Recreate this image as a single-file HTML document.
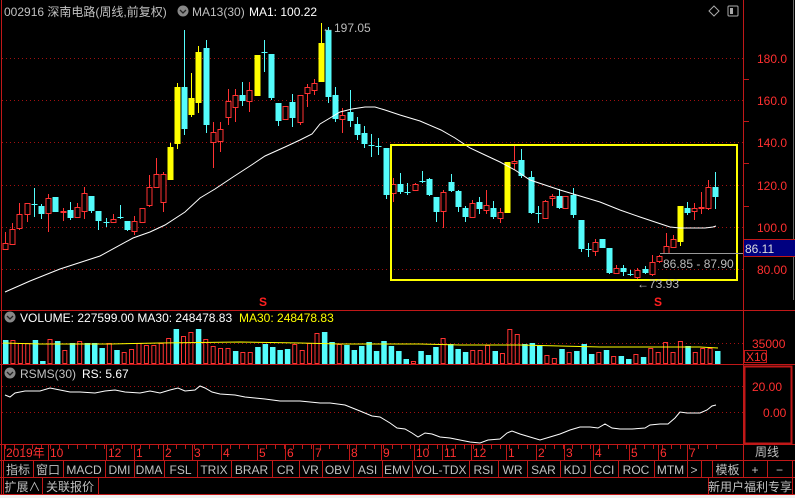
<!DOCTYPE html>
<html><head><meta charset="utf-8"><style>
html,body{margin:0;padding:0;background:#000;width:795px;height:498px;overflow:hidden;font-family:"Liberation Sans","Noto Sans CJK SC",sans-serif}
svg{position:absolute;left:0;top:0}
</style></head><body>
<svg id="s" width="795" height="498" viewBox="0 0 795 498" xmlns="http://www.w3.org/2000/svg" font-family="Liberation Sans, Noto Sans CJK SC, sans-serif">
<rect width="795" height="498" fill="#000"/>
<rect x="0" y="495" width="795" height="3" fill="#f0f0f0"/>
<g id="grid" stroke="#a01010" stroke-dasharray="1,3" stroke-width="1">
<line x1="2" y1="58.5" x2="743" y2="58.5"/><line x1="2" y1="100.5" x2="743" y2="100.5"/><line x1="2" y1="142.5" x2="743" y2="142.5"/><line x1="2" y1="185.5" x2="743" y2="185.5"/><line x1="2" y1="227.5" x2="743" y2="227.5"/><line x1="2" y1="269.5" x2="743" y2="269.5"/>
<line x1="2" y1="343.5" x2="743" y2="343.5"/><line x1="2" y1="386.5" x2="743" y2="386.5"/><line x1="2" y1="412.5" x2="743" y2="412.5"/>
</g>
<g stroke="#c01818" stroke-width="1" fill="none">
<line x1="1.5" y1="0" x2="1.5" y2="495"/>
<line x1="743.5" y1="0" x2="743.5" y2="460"/>
<line x1="0" y1="310.5" x2="795" y2="310.5"/>
<line x1="0" y1="364.5" x2="795" y2="364.5"/>
<line x1="0" y1="444.5" x2="795" y2="444.5"/>
<line x1="0" y1="460.5" x2="795" y2="460.5"/>
<line x1="0" y1="477.5" x2="795" y2="477.5"/>
<line x1="0" y1="494.5" x2="795" y2="494.5"/>
<rect x="744.5" y="366.5" width="47" height="77" stroke-width="2"/>
<rect x="744.5" y="350.5" width="22" height="12"/>
</g>
<line x1="793.5" y1="0" x2="793.5" y2="300" stroke="#666"/>
<g id="ticks" stroke="#c01818"></g>
<g id="vol"></g>
<polyline id="vma" fill="none" stroke="#ffff00" stroke-width="1"/>
<g id="cand"></g>
<polyline id="ma" fill="none" stroke="#fff" stroke-width="1"/>
<polyline id="rs" fill="none" stroke="#fff" stroke-width="1"/>
<rect x="391" y="145" width="346" height="135" fill="none" stroke="#ffff00" stroke-width="2"/>
<line x1="660" y1="253.5" x2="743" y2="253.5" stroke="#999"/>
<rect x="744" y="240" width="51" height="16" fill="#000080"/>
<line x1="744" y1="239.5" x2="795" y2="239.5" stroke="#c01818"/><line x1="744" y1="256.5" x2="795" y2="256.5" stroke="#c01818"/>
<g font-size="12" fill="#ff3030">
<text x="757" y="63">180.0</text><text x="757" y="105">160.0</text><text x="757" y="147">140.0</text><text x="757" y="190">120.0</text><text x="757" y="232">100.0</text><text x="757" y="274">80.00</text>
<text x="752" y="348">35000</text><text x="746" y="361">X10</text>
<text x="752" y="391">20.00</text><text x="763" y="417">0.00</text>
</g>
<text x="745" y="253" font-size="12" fill="#ddd">86.11</text>
<g font-size="12" fill="#bbb">
<text x="663" y="268">86.85 - 87.90</text>
<text x="637" y="288">&#8592;73.93</text>
<text x="322" y="32">&#8592;197.05</text>
</g>
<g font-size="12">
<text x="4" y="16" fill="#c0c0c0">002916 深南电路(周线,前复权)</text>
<circle cx="183" cy="11" r="5.5" fill="#888"/><path d="M180 10 l3 3 l3 -3" stroke="#222" stroke-width="1.3" fill="none"/>
<text x="192" y="16" fill="#c0c0c0">MA13(30)</text>
<text x="249" y="16" fill="#fff">MA1: 100.22</text>
<circle cx="10" cy="317" r="5.5" fill="#888"/><path d="M7 316 l3 3 l3 -3" stroke="#222" stroke-width="1.3" fill="none"/>
<text x="20" y="322" fill="#fff">VOLUME: 227599.00 MA30: 248478.83</text>
<text x="239" y="322" fill="#ffff00">MA30: 248478.83</text>
<circle cx="10" cy="373" r="5.5" fill="#888"/><path d="M7 372 l3 3 l3 -3" stroke="#222" stroke-width="1.3" fill="none"/>
<text x="20" y="378" fill="#c0c0c0">RSMS(30)</text><text x="82" y="378" fill="#fff">RS: 5.67</text>
</g>
<path d="M714 6 l5 5 l-5 5 l-5 -5 z" stroke="#aaa" fill="none"/>
<rect x="728" y="6" width="10" height="10" rx="1" stroke="#aaa" fill="none"/><rect x="730" y="8" width="3" height="6" fill="#aaa"/>
<g font-size="12" font-weight="bold" fill="#ff2020"><text x="259" y="306">S</text><text x="654" y="306">S</text></g>
<g id="dates" font-size="12" fill="#ff3030"></g>
<text x="755" y="456" font-size="12" fill="#c0c0c0">周线</text>
<g id="tb" font-size="12" fill="#c0c0c0"></g>
</svg>
<script>
var NS="http://www.w3.org/2000/svg";
function el(p,t,a,tx){var e=document.createElementNS(NS,t);for(var k in a)e.setAttribute(k,a[k]);if(tx)e.textContent=tx;document.getElementById(p).appendChild(e);return e;}
var C={r:"#ff3232",c:"#54fcfc",y:"#ffff00"};
var d=[[5,'r',243,249,232,249],[12,'r',229,244,223,244],[19,'r',214,228,203,230],[27,'r',203,214,203,222],[34,'c',204,205,188,217],[41,'c',206,214,204,219],[48,'r',198,213,194,232],[55,'c',197,212,197,212],[63,'r',211,212,208,221],[70,'c',210,218,202,220],[77,'r',207,217,203,218],[84,'r',193,211,187,219],[91,'c',196,211,196,213],[98,'c',211,221,211,230],[106,'c',222,223,218,227],[113,'r',219,222,214,223],[120,'c',217,218,205,219],[127,'c',221,230,221,231],[134,'r',221,231,216,235],[142,'r',208,222,208,223],[149,'r',187,205,175,207],[156,'r',174,187,158,187],[163,'r',174,202,172,212],[170,'y',147,180,143,180],[177,'y',87,144,83,149],[184,'c',87,129,30,135],[191,'y',98,115,73,117],[198,'y',52,103,46,113],[206,'c',48,125,40,133],[213,'r',132,142,122,168],[220,'r',129,141,122,152],[228,'r',101,117,89,125],[235,'r',95,107,89,122],[242,'c',95,101,82,106],[249,'r',90,101,82,112],[257,'y',55,96,55,96],[264,'c',52,53,40,72],[271,'c',54,98,54,100],[278,'c',103,121,103,126],[285,'r',106,119,106,119],[292,'c',102,118,94,127],[300,'r',95,122,95,125],[307,'r',87,93,84,107],[314,'r',83,90,79,95],[321,'y',43,82,23,82],[328,'c',30,97,27,103],[335,'c',95,119,87,122],[342,'r',115,119,108,133],[350,'c',112,121,90,127],[357,'c',124,135,117,140],[364,'c',133,144,126,148],[371,'c',145,146,134,157],[378,'c',146,147,138,155],[386,'c',148,195,148,199],[393,'r',184,193,178,202],[400,'c',184,192,173,194],[407,'c',192,193,183,195],[415,'r',184,190,183,191],[422,'c',181,182,171,183],[429,'c',179,195,178,196],[436,'c',197,212,197,222],[443,'r',192,211,190,228],[451,'c',182,191,174,192],[458,'c',191,207,190,212],[465,'c',208,217,206,222],[472,'r',203,217,200,218],[479,'c',202,209,197,214],[486,'r',205,210,190,214],[493,'c',208,217,201,219],[500,'r',212,218,208,223],[507,'y',162,213,162,213],[514,'r',161,163,146,170],[521,'c',160,176,149,178],[531,'c',177,213,171,214],[538,'c',213,214,206,223],[545,'r',201,218,200,219],[552,'r',196,198,194,206],[559,'c',196,208,189,209],[565,'r',196,208,196,208],[573,'c',195,215,188,218],[581,'c',220,249,220,252],[588,'c',249,250,243,257],[595,'r',242,251,239,256],[602,'c',239,248,239,248],[609,'c',248,273,248,274],[616,'r',268,273,265,274],[623,'c',268,272,265,276],[630,'c',274,275,270,276],[637,'r',270,277,268,279],[645,'c',269,273,266,274],[652,'r',262,274,255,276],[659,'r',256,261,255,263],[666,'r',246,253,233,253],[673,'r',239,247,235,248],[680,'y',206,242,206,246],[687,'c',208,213,202,215],[694,'r',208,211,203,220],[701,'r',207,208,192,214],[708,'r',187,208,180,210],[715,'c',187,197,172,209]];
d.forEach(function(c){var x=c[0],col=C[c[1]];
 el('cand','line',{x1:x+.5,x2:x+.5,y1:c[4],y2:c[5],stroke:col});
 if(c[1]=='r')el('cand','rect',{x:x-2,y:c[2]+.5,width:5,height:Math.max(c[3]-c[2],1),fill:'#000',stroke:col});
 else el('cand','rect',{x:x-2.5,y:c[2],width:6,height:Math.max(c[3]-c[2],1),fill:col});
});
document.getElementById('ma').setAttribute('points',"5,292 30,281 60,269 100,256 133,238 150,232 165,225 185,212 200,198 215,189 233,177 250,166 265,156 285,147 300,140 312,134 320,124 330,118 340,112 352,109 365,107 375,107 385,110 400,115 420,121 441,130 455,138 470,148 485,155 500,162 515,170 530,180 545,185 560,190 580,196 600,202 620,210 640,217 655,222 670,227 680,228 690,228 705,228 713,227 716,226");
document.getElementById('rs').setAttribute('points',"5,395 10,397 15,393 25,391 40,391 50,388 60,390 70,392 80,392 95,393 105,391 115,390 125,392 140,393 150,391 160,393 170,390 178,388 185,391 195,390 200,386 205,388 212,392 220,394 235,395 245,397 255,398 265,399 280,401 300,401 320,403 330,403 345,405 360,411 372,416 380,417 390,423 397,428 405,429 412,433 418,437 425,433 432,434 440,437 450,438 460,440 470,442 480,443 488,440 500,439 507,433 512,431 520,434 530,437 540,440 550,437 560,434 570,430 580,427 590,427 598,428 605,424 612,428 620,429 632,429 645,428 650,425 660,424 668,424 675,418 680,412 687,413 700,413 707,410 712,406 716,405");
var v="340c,340r,343r,343r,340c,361c,339r,341c,350r,343c,341r,343c,343c,348c,343r,350c,352r,349r,343r,345r,345r,343r,338r,329c,336r,332r,329c,339r,346r,348r,348r,351c,352r,352r,347c,344c,347c,350c,349c,344r,350r,343r,333r,332c,342c,344r,345c,350c,346c,342c,351c,341c,346c,351c,359c,361r,351c,355c,347c,338r,344c,349c,352c,350r,350r,345r,351c,353r,329r,334r,344c,343c,346c,355r,358r,349c,352r,351c,344c,354c,352r,350c,356r,356c,359c,354r,357c,348r,352r,342r,352r,341r,346c,352r,348r,348r,351c".split(',');
var n=v.length;v.forEach(function(s,i){var x=3+i*(712/(n-1)),y=parseInt(s),c=s.slice(-1);
 if(c=='r')el('vol','rect',{x:x+.5,y:y+.5,width:4,height:363-y,fill:'none',stroke:C.r});
 else el('vol','rect',{x:x,y:y,width:5.5,height:364-y,fill:C.c});});
document.getElementById('vma').setAttribute('points',"3,343 40,344 110,344 160,343 240,342 300,343 340,344 420,344 460,345 520,345 560,346 600,347 640,347 700,347 718,348");
var dt=[["2019年",5],["10",49],["12",107],["1",135],["2",164],["3",193],["4",222],["5",258],["6",286],["7",314],["8",350],["9",382],["10",415],["11",443],["12",472],["1",507],["2",537],["3",565],["4",594],["5",630],["6",659],["7",688]];
dt.forEach(function(a){el('dates','text',{x:a[1]+1,y:457},a[0]);el('ticks','line',{x1:a[1]-.5,x2:a[1]-.5,y1:445,y2:460});});
for(var x=5;x<720;x+=9)el('ticks','line',{x1:x+.5,x2:x+.5,y1:445,y2:449});
[79,121,163,206,248].forEach(function(y){el('ticks','line',{x1:744,x2:749,y1:y+.5,y2:y+.5});});
var tb=[["指标",3,33],["窗口",33,63],["MACD",63,105],["DMI",105,134],["DMA",134,164],["FSL",164,197],["TRIX",197,231],["BRAR",231,272],["CR",272,299],["VR",299,322],["OBV",322,353],["ASI",353,382],["EMV",382,412],["VOL-TDX",412,469],["RSI",469,498],["WR",498,527],["SAR",527,560],["KDJ",560,590],["CCI",590,618],["ROC",618,654],["MTM",654,687],[">",687,701],["",701,712],["模板",712,743],["+",743,767],["−",767,792]];
tb.forEach(function(a){el('tb','rect',{x:a[1]+.5,y:460.5,width:a[2]-a[1],height:17,fill:'none',stroke:'#c01818'});el('tb','text',{x:(a[1]+a[2])/2,y:474,'text-anchor':'middle'},a[0]);});
[["扩展∧",3,42],["关联报价",42,98],["新用户福利专享",708,792]].forEach(function(a){el('tb','rect',{x:a[1]+.5,y:477.5,width:a[2]-a[1],height:17,fill:'none',stroke:'#c01818'});el('tb','text',{x:(a[1]+a[2])/2,y:491,'text-anchor':'middle'},a[0]);});
</script>
</body></html>
